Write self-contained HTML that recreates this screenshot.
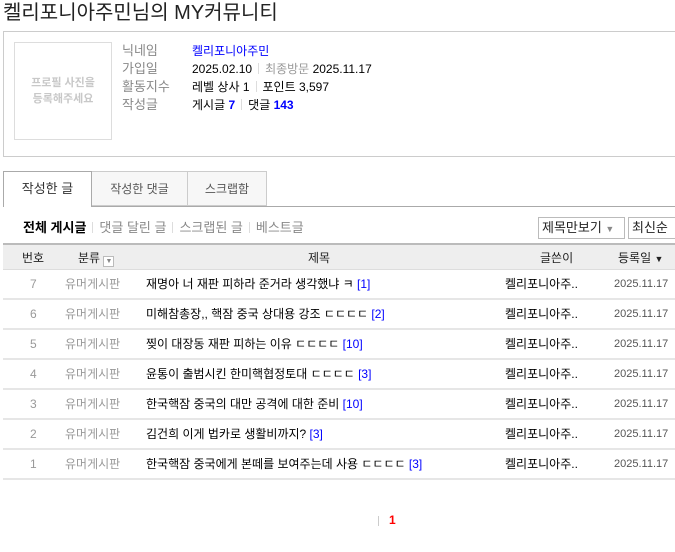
<!DOCTYPE html>
<html><head><meta charset="utf-8"><style>
*{margin:0;padding:0;box-sizing:border-box}
body{width:675px;height:552px;background:#fff;font-family:"Liberation Sans","Noto Sans CJK KR","NanumGothic",sans-serif;font-size:12px;color:#000;position:relative;overflow:hidden}
.a{position:absolute;white-space:nowrap}
.g{color:#999}
.lbl{color:#888}
.sep{display:inline-block;width:1px;height:11px;background:#ddd;margin:0 6px;vertical-align:-1px}
.b{color:#00f;font-weight:normal}
.row{position:absolute;left:3px;width:672px;height:30px;border-bottom:2px solid #e6e6e6}
.row span{position:absolute;top:7px;line-height:14px;white-space:nowrap}
.row span.d{left:611px;color:#555;font-size:11px}
</style></head><body>
<div class="a" style="left:3px;top:0px;font-size:20px;line-height:26px;color:#222">켈리포니아주민님의 MY커뮤니티</div>
<div class="a" style="left:3px;top:31px;width:680px;height:126px;border:1px solid #ccc"></div>
<div class="a" style="left:14px;top:42px;width:98px;height:98px;border:1px solid #ddd;color:#c8c8c8;font-size:11px;text-align:center;line-height:16px;padding-top:32px;font-weight:bold">프로필 사진을<br>등록해주세요</div>
<div class="a lbl" style="left:122px;top:42px;line-height:18px;font-size:13px">닉네임<br>가입일<br>활동지수<br>작성글</div>
<div class="a" style="left:192px;top:42px;line-height:18px">
<div style="color:#00f">켈리포니아주민</div>
<div>2025.02.10<span class="sep"></span><span class="g">최종방문</span> 2025.11.17</div>
<div>레벨 상사 1<span class="sep"></span>포인트 3,597</div>
<div>게시글 <b style="color:#00f">7</b><span class="sep"></span>댓글 <b style="color:#00f">143</b></div>
</div>
<div class="a" style="left:91px;top:206px;width:584px;height:1px;background:#aaa"></div>
<div class="a" style="left:3px;top:171px;width:89px;height:36px;border:1px solid #aaa;border-bottom:none;background:#fff;text-align:center;line-height:34px;font-size:13px;color:#333">작성한 글</div>
<div class="a" style="left:92px;top:171px;width:96px;height:35px;border:1px solid #ccc;border-left:none;background:#f7f7f7;text-align:center;line-height:34px;color:#555">작성한 댓글</div>
<div class="a" style="left:188px;top:171px;width:79px;height:35px;border:1px solid #ccc;border-left:none;background:#f7f7f7;text-align:center;line-height:34px;color:#555">스크랩함</div>
<div class="a" style="left:23px;top:220px;line-height:16px;font-size:13px;color:#888"><b style="color:#000">전체 게시글</b><span class="sep"></span>댓글 달린 글<span class="sep"></span>스크랩된 글<span class="sep"></span>베스트글</div>
<div class="a" style="left:538px;top:217px;width:87px;height:22px;border:1px solid #bbb;line-height:20px;padding-left:3px;font-size:13px;color:#222">제목만보기 <span style="color:#888;font-size:9px">▼</span></div>
<div class="a" style="left:628px;top:217px;width:50px;height:22px;border:1px solid #bbb;line-height:20px;padding-left:3px;font-size:13px;color:#222">최신순</div>
<div class="a" style="left:3px;top:243px;width:672px;height:27px;background:#eee;border-top:2px solid #bbb;border-bottom:1px solid #ddd"></div>
<div class="a" style="left:22px;top:249px;color:#222">번호</div>
<div class="a" style="left:78px;top:249px;color:#222">분류 <span style="display:inline-block;width:11px;height:11px;border:1px solid #bbb;background:#fff;font-size:7px;line-height:9px;text-align:center;color:#888;vertical-align:-1px">▼</span></div>
<div class="a" style="left:308px;top:249px;color:#222">제목</div>
<div class="a" style="left:540px;top:249px;color:#222">글쓴이</div>
<div class="a" style="left:618px;top:249px;color:#222">등록일 <span style="font-size:9px">▼</span></div>

<div class="row" style="top:270px"><span class="g" style="left:27px">7</span><span class="g" style="left:62px">유머게시판</span><span style="left:143px">재명아 너 재판 피하라 준거라 생각했냐 ㅋ <b class="b">[1]</b></span><span style="left:502px">켈리포니아주..</span><span class="d">2025.11.17</span></div>
<div class="row" style="top:300px"><span class="g" style="left:27px">6</span><span class="g" style="left:62px">유머게시판</span><span style="left:143px">미해참총장,, 핵잠 중국 상대용 강조 ㄷㄷㄷㄷ <b class="b">[2]</b></span><span style="left:502px">켈리포니아주..</span><span class="d">2025.11.17</span></div>
<div class="row" style="top:330px"><span class="g" style="left:27px">5</span><span class="g" style="left:62px">유머게시판</span><span style="left:143px">찢이 대장동 재판 피하는 이유 ㄷㄷㄷㄷ <b class="b">[10]</b></span><span style="left:502px">켈리포니아주..</span><span class="d">2025.11.17</span></div>
<div class="row" style="top:360px"><span class="g" style="left:27px">4</span><span class="g" style="left:62px">유머게시판</span><span style="left:143px">윤통이 출범시킨 한미핵협정토대 ㄷㄷㄷㄷ <b class="b">[3]</b></span><span style="left:502px">켈리포니아주..</span><span class="d">2025.11.17</span></div>
<div class="row" style="top:390px"><span class="g" style="left:27px">3</span><span class="g" style="left:62px">유머게시판</span><span style="left:143px">한국핵잠 중국의 대만 공격에 대한 준비 <b class="b">[10]</b></span><span style="left:502px">켈리포니아주..</span><span class="d">2025.11.17</span></div>
<div class="row" style="top:420px"><span class="g" style="left:27px">2</span><span class="g" style="left:62px">유머게시판</span><span style="left:143px">김건희 이게 법카로 생활비까지? <b class="b">[3]</b></span><span style="left:502px">켈리포니아주..</span><span class="d">2025.11.17</span></div>
<div class="row" style="top:450px"><span class="g" style="left:27px">1</span><span class="g" style="left:62px">유머게시판</span><span style="left:143px">한국핵잠 중국에게 본떼를 보여주는데 사용 ㄷㄷㄷㄷ <b class="b">[3]</b></span><span style="left:502px">켈리포니아주..</span><span class="d">2025.11.17</span></div>

<div class="a" style="left:378px;top:516px;width:1px;height:10px;background:#ccc"></div>
<div class="a" style="left:389px;top:513px;color:#f00;font-weight:bold;font-size:12px">1</div>
</body></html>
